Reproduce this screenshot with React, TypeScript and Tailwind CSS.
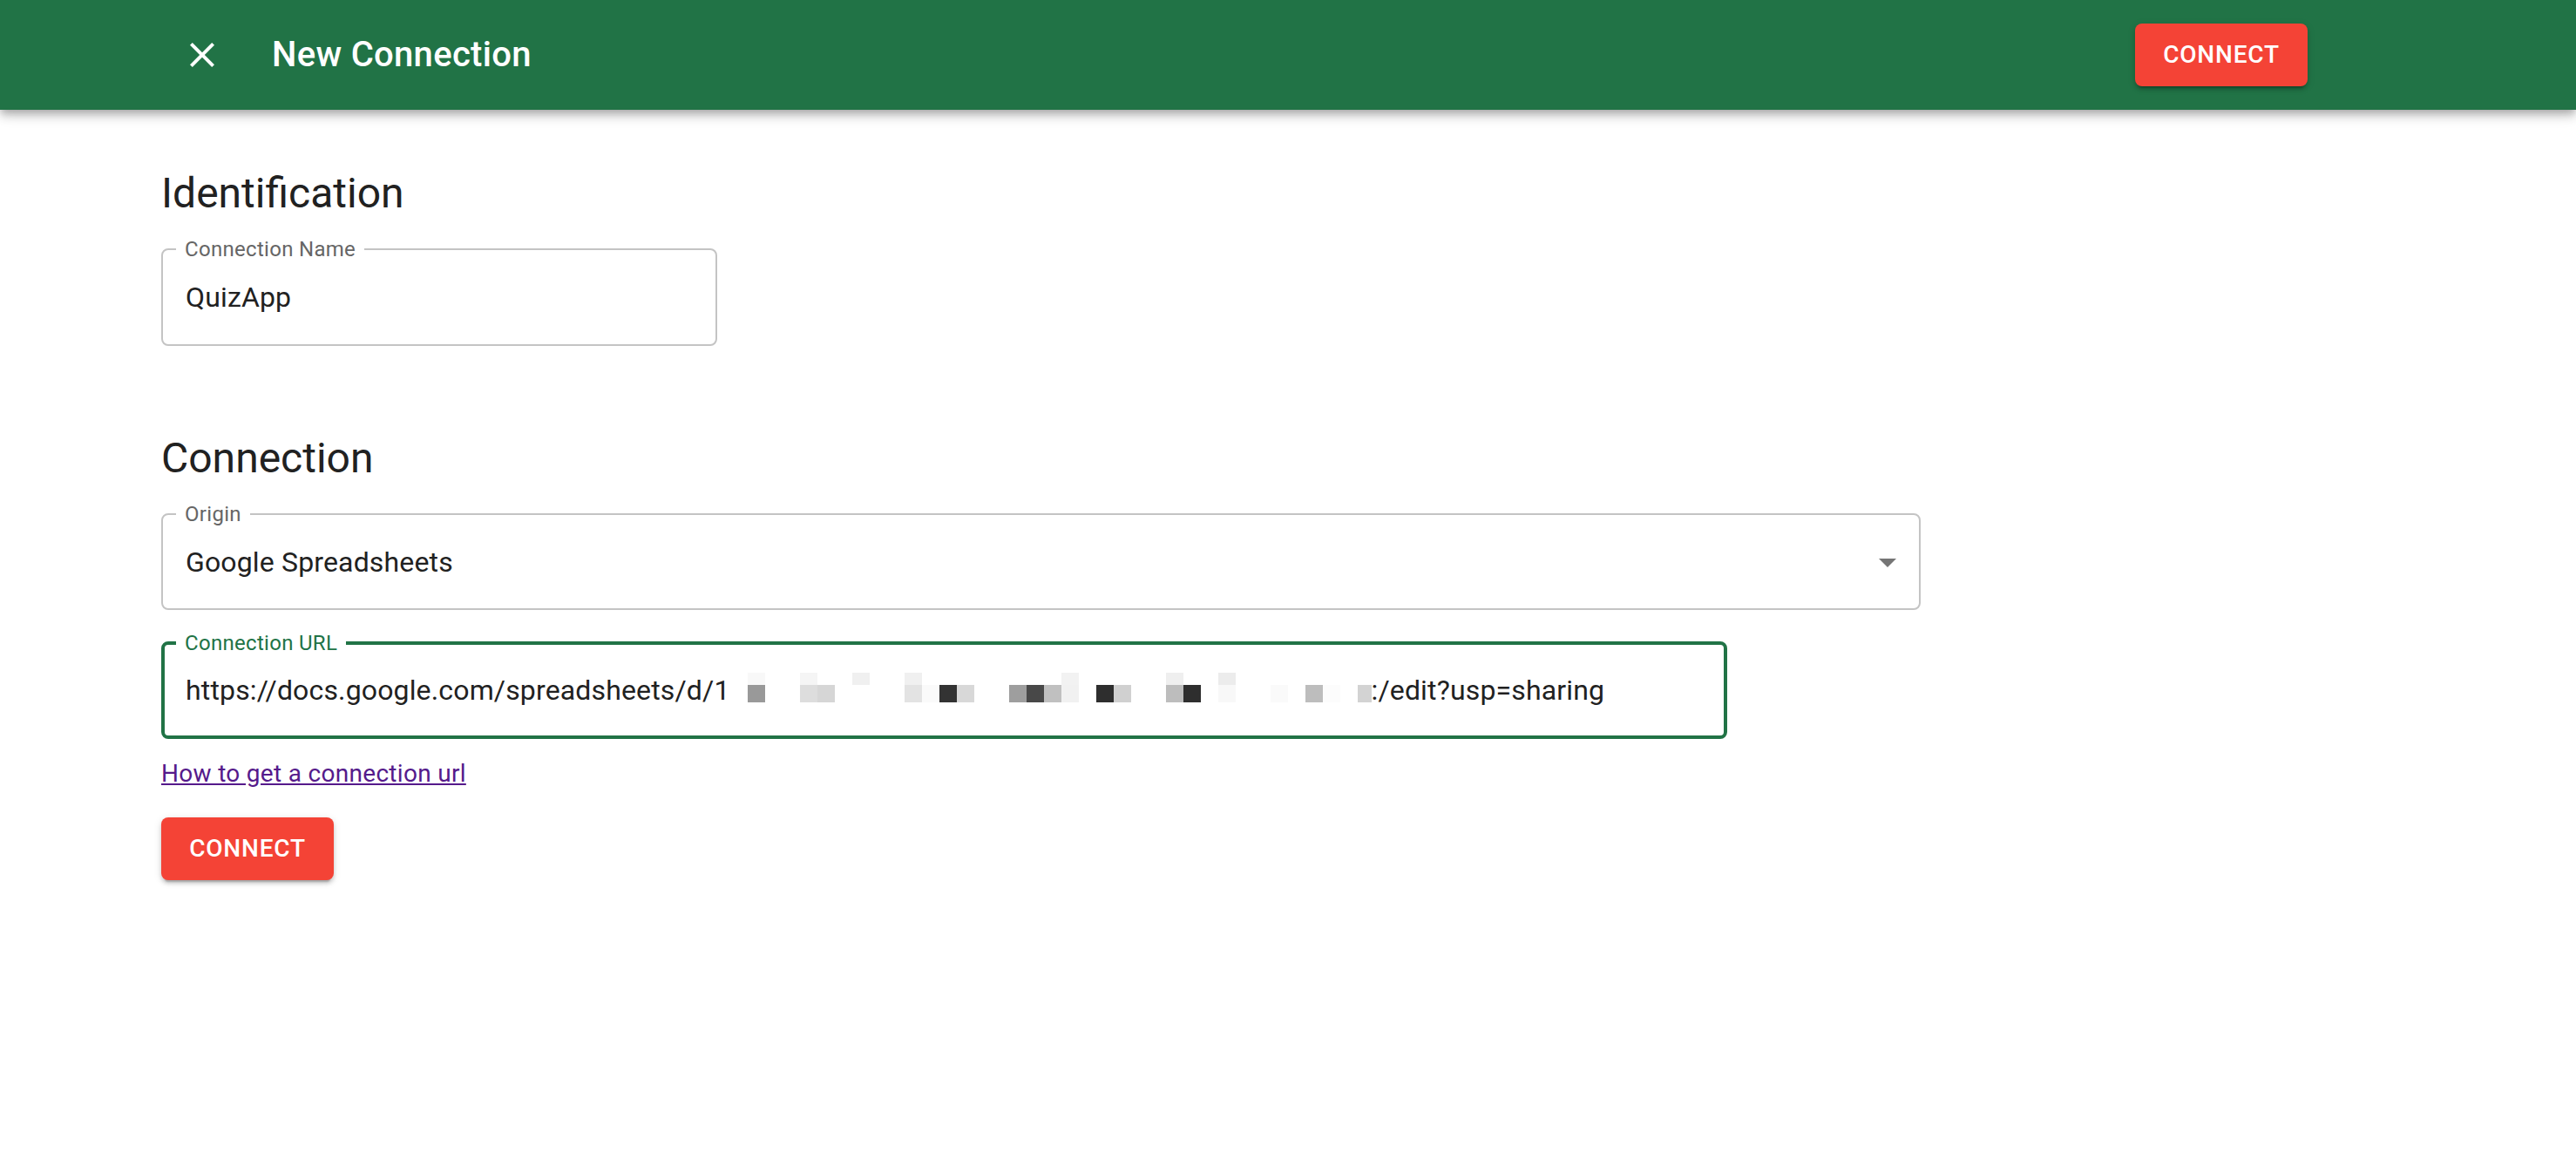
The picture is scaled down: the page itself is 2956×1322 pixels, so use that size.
import React from 'react';

const FONT = { fontFamily: "Roboto, 'Liberation Sans', sans-serif" };

// pixelated blocks hiding the sheet id: [x, color], x relative to svg left
const BOTTOM_ROW: [number, string][] = [
  [20, '#999999'], [80, '#dddddd'], [100, '#d6d6d6'], [200, '#e3e3e3'], [220, '#fafafa'],
  [240, '#333333'], [260, '#d8d8d8'], [320, '#9e9e9e'], [340, '#484848'], [360, '#c0c0c0'],
  [380, '#f1f1f1'], [420, '#2e2e2e'], [440, '#d0d0d0'], [500, '#bdbdbd'], [520, '#2e2e2e'],
  [560, '#f8f8f8'], [620, '#fafafa'], [660, '#bdbdbd'], [680, '#fcfcfc'], [720, '#d3d3d3'],
];
const TOP_ROW: [number, string][] = [
  [20, '#f8f8f8'], [80, '#f5f5f5'], [140, '#f0f0f0'], [200, '#f0f0f0'], [380, '#f2f2f2'],
  [500, '#efefef'], [560, '#ececec'],
];

function Redacted() {
  return (
    <svg width="736" height="34" viewBox="0 0 736 34" className="inline-block align-[-3px]">
      {TOP_ROW.map(([x, c]) => (
        <rect key={'t' + x} x={x} y={0} width={20} height={14} fill={c} />
      ))}
      {BOTTOM_ROW.map(([x, c]) => (
        <rect key={'b' + x} x={x} y={14} width={20} height={20} fill={c} />
      ))}
    </svg>
  );
}

function ConnectButton() {
  return (
    <button className="h-[72px] w-[198px] rounded-[8px] bg-[#f44336] text-[28px] font-medium uppercase tracking-[0.8px] text-white shadow-[0_6px_2px_-4px_rgba(0,0,0,0.2),0_4px_4px_0_rgba(0,0,0,0.14),0_2px_10px_0_rgba(0,0,0,0.12)]">
      Connect
    </button>
  );
}

export default function App() {
  return (
    <div className="min-h-screen bg-white text-[#212121]" style={FONT}>
      {/* App bar */}
      <header className="relative z-10 flex h-[126px] items-center bg-[#217346] pl-[184px] pr-[308px] text-white shadow-[0_4px_8px_-2px_rgba(0,0,0,0.2),0_8px_10px_0_rgba(0,0,0,0.14),0_2px_20px_0_rgba(0,0,0,0.12)]">
        <button className="flex h-[96px] w-[96px] items-center justify-center rounded-full">
          <svg width="48" height="48" viewBox="0 0 24 24" fill="white">
            <path d="M19 6.41 17.59 5 12 10.59 6.41 5 5 6.41 10.59 12 5 17.59 6.41 19 12 13.41 17.59 19 19 17.59 13.41 12z" />
          </svg>
        </button>
        <h1 className="ml-[32px] flex-1 text-[40px] font-medium leading-[64px] tracking-[0.3px]">New Connection</h1>
        <ConnectButton />
      </header>

      <main className="pl-[185px] pt-[64px]">
        {/* Identification */}
        <h2 className="text-[48px] font-normal leading-[64px]">Identification</h2>
        <div className="relative mt-[31px] flex h-[112px] w-[638px] items-center rounded-[8px] border-2 border-[#c4c4c4] pl-[26px]">
          <span className="absolute left-[15px] top-[-15px] bg-white px-[10px] text-[24px] leading-[28px] tracking-[0.3px] text-[#666666]">
            Connection Name
          </span>
          <span className="text-[32px] leading-[46px] tracking-[0.15px]">QuizApp</span>
        </div>

        {/* Connection */}
        <h2 className="mt-[97px] text-[48px] font-normal leading-[64px]">Connection</h2>
        <div className="relative mt-[31px] flex h-[111px] w-[2019px] items-center justify-between rounded-[8px] border-2 border-[#c4c4c4] pl-[26px] pr-[12px]">
          <span className="absolute left-[15px] top-[-15px] bg-white px-[10px] text-[24px] leading-[28px] tracking-[0.3px] text-[#666666]">
            Origin
          </span>
          <span className="text-[32px] leading-[46px] tracking-[0.15px]">Google Spreadsheets</span>
          <svg width="48" height="48" viewBox="0 0 24 24" fill="#757575">
            <path d="M7 10l5 5 5-5z" />
          </svg>
        </div>

        <div className="relative mt-[36px] flex h-[112px] w-[1797px] items-center rounded-[8px] border-4 border-[#217346] pl-[24px]">
          <span className="absolute left-[13px] top-[-16px] bg-white px-[10px] text-[24px] leading-[28px] tracking-[0.3px] text-[#217346]">
            Connection URL
          </span>
          <span className="whitespace-nowrap text-[32px] leading-[46px] tracking-[0.15px]">
            https://docs.google.com/spreadsheets/d/1
            <Redacted />
            :/edit?usp=sharing
          </span>
        </div>

        <a href="#" className="mt-[20px] inline-block text-[28px] leading-[40px] tracking-[0.3px] text-[#551a8b] underline">
          How to get a connection url
        </a>

        <div className="mt-[30px]">
          <ConnectButton />
        </div>
      </main>
    </div>
  );
}
